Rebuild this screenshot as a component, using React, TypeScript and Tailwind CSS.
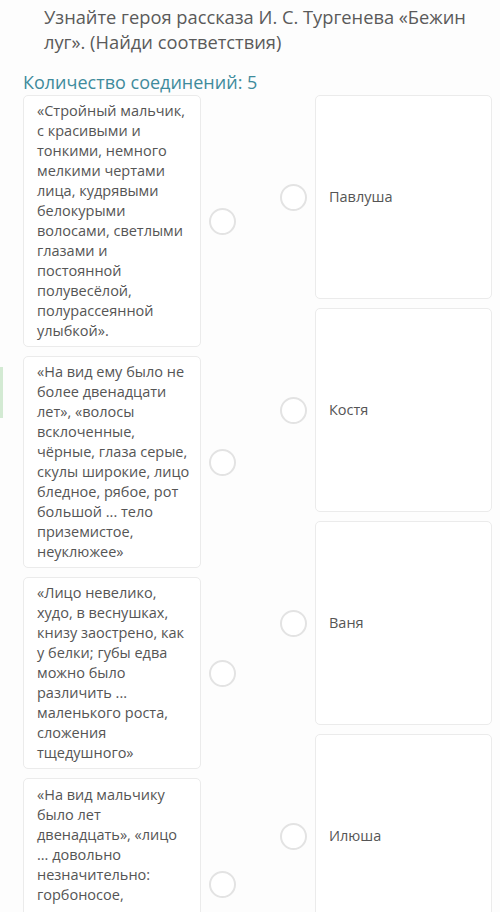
import React from "react";

const leftCards: string[][] = [
  [
    "«Стройный мальчик,",
    "с красивыми и",
    "тонкими, немного",
    "мелкими чертами",
    "лица, кудрявыми",
    "белокурыми",
    "волосами, светлыми",
    "глазами и",
    "постоянной",
    "полувесёлой,",
    "полурассеянной",
    "улыбкой».",
  ],
  [
    "«На вид ему было не",
    "более двенадцати",
    "лет», «волосы",
    "всклоченные,",
    "чёрные, глаза серые,",
    "скулы широкие, лицо",
    "бледное, рябое, рот",
    "большой ... тело",
    "приземистое,",
    "неуклюжее»",
  ],
  [
    "«Лицо невелико,",
    "худо, в веснушках,",
    "книзу заострено, как",
    "у белки; губы едва",
    "можно было",
    "различить ...",
    "маленького роста,",
    "сложения",
    "тщедушного»",
  ],
  [
    "«На вид мальчику",
    "было лет",
    "двенадцать», «лицо",
    "... довольно",
    "незначительно:",
    "горбоносое,",
  ],
];

const rightCards = ["Павлуша", "Костя", "Ваня", "Илюша"];

function Circle() {
  return (
    <div className="w-[27px] h-[27px] rounded-full border-2 border-[#e3e3e3] bg-white shrink-0" />
  );
}

export default function App() {
  return (
    <div
      className="relative w-[500px] h-[912px] overflow-hidden bg-[#fdfdfd] text-[#555]"
      style={{ fontFamily: '"Open Sans", "Noto Sans", sans-serif' }}
    >
      <div className="absolute left-0 top-[367px] w-[3px] h-[51px] bg-[#d3ead3]" />
      <div className="pl-[44px] pt-[4px] text-[18.3px] leading-[25px] text-[#5a5a5a] whitespace-nowrap">
        Узнайте героя рассказа И. С. Тургенева «Бежин
        <br />
        луг». (Найди соответствия)
      </div>
      <div className="pl-[23px] mt-[16px] text-[18px] leading-[24px] text-[#3f8b9c]">
        Количество соединений: 5
      </div>
      <div className="flex pl-[23px] mt-[1px]">
        <div className="flex flex-col gap-[9px] w-[212px]">
          {leftCards.map((lines, i) => (
            <div key={i} className="flex items-center">
              <div
                className={
                  "w-[178px] shrink-0 bg-white border border-[#ebebeb] rounded-[5px] px-[13px] py-[5px] text-[14.5px] leading-[20px] text-[#555] " +
                  (i === 3 ? "h-[212px] pt-[6px]" : "")
                }
              >
                {lines.map((l, j) => (
                  <div key={j} className="whitespace-nowrap">
                    {l}
                  </div>
                ))}
              </div>
              <div className="ml-[8px]">
                <Circle />
              </div>
            </div>
          ))}
        </div>
        <div className="flex flex-col gap-[9px] ml-[45px]">
          {rightCards.map((name, i) => (
            <div key={i} className="flex items-center h-[204px]">
              <Circle />
              <div className="ml-[8px] w-[177px] h-full bg-white border border-[#ebebeb] rounded-[5px] flex items-center px-[13px] text-[14.5px] text-[#555]">
                {name}
              </div>
            </div>
          ))}
        </div>
      </div>
    </div>
  );
}
